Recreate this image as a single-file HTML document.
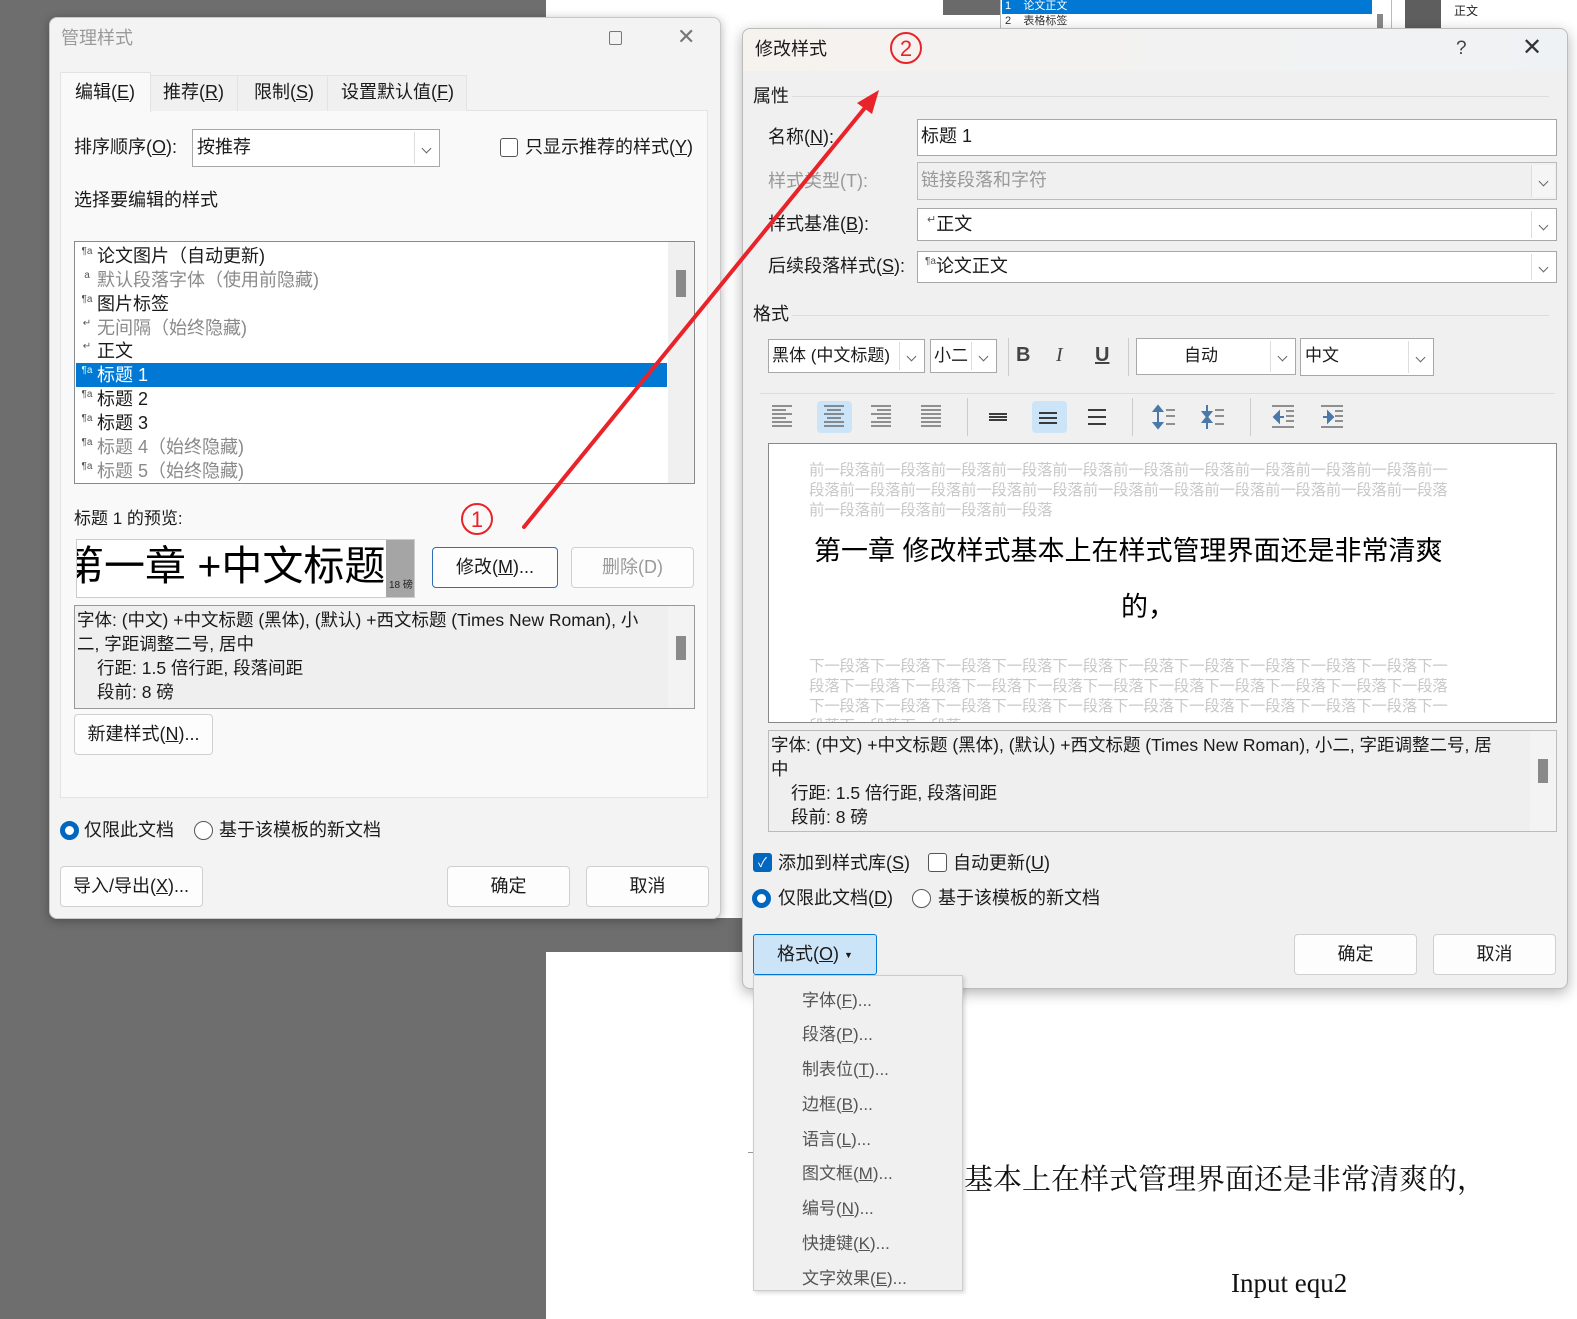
<!DOCTYPE html>
<html><head><meta charset="utf-8">
<style>
*{margin:0;padding:0;box-sizing:border-box}
body{width:1577px;height:1319px;position:relative;overflow:hidden;background:#fff;font-family:"Liberation Sans","Noto Sans CJK SC",sans-serif;font-size:18px;color:#1a1a1a}
.a{position:absolute}
.t{position:absolute;white-space:nowrap;line-height:1}
.btn{position:absolute;background:#fdfdfd;border:1px solid #d0d0d0;border-radius:4px;text-align:center;font-size:18px}
.dd{position:absolute;background:#fff;border:1px solid #a8a8a8}
.dd .ar{position:absolute;right:1px;top:2px;bottom:2px;width:24px;border-left:1px solid #ddd;background:#fff}
.dd .ar:after{content:"";position:absolute;left:8px;top:40%;width:6px;height:6px;border-right:1px solid #666;border-bottom:1px solid #666;transform:rotate(45deg)}
.gray{color:#8a8a8a}
.li{position:absolute;left:2px;height:24px;line-height:24px;font-size:18px;white-space:nowrap;width:590px}
.pm{display:inline-block;width:20px;font-size:10px;vertical-align:top;line-height:16px;color:#555;text-align:center}
.ic{position:absolute}
.mi{position:absolute;left:48px;font-size:17px;color:#555;white-space:nowrap}
.pv{position:absolute;left:40px;font-size:15.5px;color:#c8c8c8;white-space:nowrap;line-height:20px;letter-spacing:-0.3px}
</style></head><body>

<div class="a" style="left:0;top:0;width:546px;height:1319px;background:#6e6e6e"></div>
<div class="a" style="left:546px;top:918px;width:200px;height:34px;background:#6e6e6e"></div>
<div class="a" style="left:943px;top:0;width:58px;height:15px;background:#6a6a6a"></div>
<div class="a" style="left:1000px;top:0;width:392px;height:30px;background:#fff;border:1px solid #bbb;border-top:none"></div>
<div class="a" style="left:1002px;top:0;width:370px;height:14px;background:#0078d4"></div>
<div class="t" style="left:1005px;top:1px;font-size:11px;color:#fff">1&nbsp;&nbsp;&nbsp;&nbsp;论文正文</div>
<div class="t" style="left:1005px;top:16px;font-size:11px;color:#333">2&nbsp;&nbsp;&nbsp;&nbsp;表格标签</div>
<div class="a" style="left:1377px;top:14px;width:6px;height:16px;background:#888"></div>
<div class="a" style="left:1405px;top:0;width:36px;height:30px;background:#5e5e5e"></div>
<div class="t" style="left:1454px;top:5px;font-size:12px;color:#222">正文</div>

<div class="a" style="left:748px;top:1152px;width:14px;height:1px;background:#999"></div>
<div class="t" style="left:964px;top:1166px;font-family:'Liberation Serif','Noto Serif CJK SC',serif;font-size:29px;color:#111">基本上在样式管理界面还是非常清爽的，</div>
<div class="t" style="left:1231px;top:1270px;font-family:'Liberation Serif',serif;font-size:27px;color:#111">Input equ2</div>

<div class="a" style="left:49px;top:17px;width:672px;height:902px;background:#f3f3f3;border:1px solid #c8c8c8;border-radius:8px;box-shadow:0 2px 10px rgba(0,0,0,.3)"></div>
<div class="t" style="left:61px;top:29px;font-size:18px;color:#9a9a9a">管理样式</div>
<div class="a" style="left:609px;top:31px;width:13px;height:14px;border:1px solid #777;border-radius:2px"></div>
<div class="t" style="left:677px;top:26px;font-size:22px;color:#777">✕</div>
<div class="a" style="left:60px;top:110px;width:648px;height:688px;background:#f9f9f9;border:1px solid #e3e3e3"></div>
<div class="a" style="left:150px;top:75px;width:317px;height:36px;background:#f0f0f0;border:1px solid #e3e3e3;border-bottom:none"></div>
<div class="a" style="left:237px;top:75px;width:1px;height:36px;background:#e3e3e3"></div>
<div class="a" style="left:327px;top:75px;width:1px;height:36px;background:#e3e3e3"></div>
<div class="a" style="left:60px;top:72px;width:91px;height:40px;background:#f9f9f9;border:1px solid #e3e3e3;border-bottom:none"></div>
<div class="t" style="left:75px;top:83px">编辑(<u>E</u>)</div>
<div class="t" style="left:163px;top:83px">推荐(<u>R</u>)</div>
<div class="t" style="left:254px;top:83px">限制(<u>S</u>)</div>
<div class="t" style="left:341px;top:83px">设置默认值(<u>F</u>)</div>
<div class="t" style="left:74px;top:138px">排序顺序(<u>O</u>):</div>
<div class="dd" style="left:192px;top:129px;width:248px;height:38px"><div class="ar"></div></div>
<div class="t" style="left:197px;top:138px">按推荐</div>
<div class="a" style="left:500px;top:138px;width:18px;height:19px;border:1px solid #555;border-radius:3px;background:#fff"></div>
<div class="t" style="left:525px;top:138px">只显示推荐的样式(<u>Y</u>)</div>
<div class="t" style="left:74px;top:191px">选择要编辑的样式</div>
<div class="a" style="left:74px;top:241px;width:621px;height:243px;background:#fff;border:1px solid #8a8a8a;overflow:hidden">
 <div class="a" style="right:0;top:0;width:26px;height:243px;background:#f0f0f0"></div>
 <div class="a" style="right:8px;top:28px;width:10px;height:27px;background:#8a8a8a"></div>
 <div class="a" style="left:1px;top:121px;width:591px;height:24px;background:#0078d4"></div>
 <div class="li" style="top:2px"><span class="pm">¶a</span>论文图片（自动更新)</div>
 <div class="li gray" style="top:26px"><span class="pm">a</span>默认段落字体（使用前隐藏)</div>
 <div class="li" style="top:50px"><span class="pm">¶a</span>图片标签</div>
 <div class="li gray" style="top:74px"><span class="pm">↵</span>无间隔（始终隐藏)</div>
 <div class="li" style="top:97px"><span class="pm">↵</span>正文</div>
 <div class="li" style="top:121px;color:#fff"><span class="pm" style="color:#cfe">¶a</span>标题 1</div>
 <div class="li" style="top:145px"><span class="pm">¶a</span>标题 2</div>
 <div class="li" style="top:169px"><span class="pm">¶a</span>标题 3</div>
 <div class="li gray" style="top:193px"><span class="pm">¶a</span>标题 4（始终隐藏)</div>
 <div class="li gray" style="top:217px"><span class="pm">¶a</span>标题 5（始终隐藏)</div>
</div>
<div class="t" style="left:74px;top:510px;font-size:17px">标题 1 的预览:</div>
<div class="a" style="left:76px;top:539px;width:339px;height:59px;background:#fff;border:1px solid #ccc;overflow:hidden">
 <div class="t" style="left:-14px;top:6px;font-size:41px;color:#000">第一章 +中文标题</div>
 <div class="a" style="left:309px;top:0;width:30px;height:59px;background:#a5a5a5"></div>
 <div class="t" style="left:312px;top:41px;font-size:10px;color:#222">18 磅</div>
</div>
<div class="btn" style="left:432px;top:547px;width:126px;height:41px;line-height:39px;border:1px solid #2f6fb3">修改(<u>M</u>)...</div>
<div class="btn" style="left:571px;top:547px;width:123px;height:41px;line-height:39px;color:#999">删除(D)</div>
<div class="a" style="left:74px;top:605px;width:621px;height:104px;background:#efefef;border:1px solid #999;overflow:hidden">
 <div class="a" style="right:0;top:0;width:26px;height:104px;background:#f3f3f3"></div>
 <div class="a" style="right:8px;top:30px;width:10px;height:24px;background:#8a8a8a"></div>
 <div class="t" style="left:2px;top:6px;font-size:17.5px">字体: (中文) +中文标题 (黑体), (默认) +西文标题 (Times New Roman), 小</div>
 <div class="t" style="left:2px;top:30px;font-size:17.5px">二, 字距调整二号, 居中</div>
 <div class="t" style="left:22px;top:54px;font-size:17.5px">行距: 1.5 倍行距, 段落间距</div>
 <div class="t" style="left:22px;top:78px;font-size:17.5px">段前: 8 磅</div>
</div>
<div class="btn" style="left:74px;top:714px;width:139px;height:41px;line-height:39px">新建样式(<u>N</u>)...</div>
<div class="a" style="left:60px;top:821px;width:19px;height:19px;border-radius:50%;border:5px solid #0067c0;background:#fff"></div>
<div class="t" style="left:84px;top:821px">仅限此文档</div>
<div class="a" style="left:194px;top:821px;width:19px;height:19px;border-radius:50%;border:1px solid #555;background:#fff"></div>
<div class="t" style="left:219px;top:821px">基于该模板的新文档</div>
<div class="btn" style="left:60px;top:866px;width:143px;height:41px;line-height:39px;text-align:left;padding-left:12px">导入/导出(<u>X</u>)...</div>
<div class="btn" style="left:447px;top:866px;width:123px;height:41px;line-height:39px">确定</div>
<div class="btn" style="left:586px;top:866px;width:123px;height:41px;line-height:39px">取消</div>

<div class="a" style="left:742px;top:28px;width:826px;height:961px;background:#f0f0f0;border:1px solid #bcbcbc;border-radius:8px;box-shadow:0 4px 14px rgba(0,0,0,.3)"></div>
<div class="a" style="left:743px;top:29px;width:824px;height:42px;background:linear-gradient(90deg,#f6f2ee,#eff2f5);border-radius:8px 8px 0 0"></div>
<div class="t" style="left:755px;top:40px">修改样式</div>
<div class="t" style="left:1456px;top:39px;font-size:19px;color:#444">?</div>
<div class="t" style="left:1522px;top:36px;font-size:24px;color:#333">✕</div>
<div class="t" style="left:753px;top:87px">属性</div>
<div class="a" style="left:792px;top:96px;width:757px;height:1px;background:#dcdcdc"></div>
<div class="t" style="left:768px;top:128px">名称(<u>N</u>):</div>
<div class="t gray" style="left:768px;top:172px;color:#999">样式类型(T):</div>
<div class="t" style="left:768px;top:215px">样式基准(<u>B</u>):</div>
<div class="t" style="left:768px;top:257px">后续段落样式(<u>S</u>):</div>
<div class="dd" style="left:917px;top:119px;width:640px;height:37px"></div>
<div class="t" style="left:921px;top:127px">标题 1</div>
<div class="dd" style="left:917px;top:162px;width:640px;height:38px;background:#f0f0f0;border-color:#bbb"><div class="ar" style="background:#f5f5f5"></div></div>
<div class="t" style="left:921px;top:171px;color:#999">链接段落和字符</div>
<div class="dd" style="left:917px;top:208px;width:640px;height:33px"><div class="ar"></div></div>
<div class="t" style="left:927px;top:215px"><span style="font-size:11px;vertical-align:top;color:#555">↵</span>正文</div>
<div class="dd" style="left:917px;top:251px;width:640px;height:32px"><div class="ar"></div></div>
<div class="t" style="left:925px;top:257px"><span style="font-size:10px;vertical-align:top;color:#555">¶a</span>论文正文</div>
<div class="t" style="left:753px;top:305px">格式</div>
<div class="a" style="left:792px;top:315px;width:757px;height:1px;background:#dcdcdc"></div>
<div class="dd" style="left:768px;top:339px;width:157px;height:34px"><div class="ar"></div></div>
<div class="t" style="left:772px;top:347px;font-size:17px">黑体 (中文标题)</div>
<div class="dd" style="left:930px;top:339px;width:67px;height:34px"><div class="ar"></div></div>
<div class="t" style="left:934px;top:347px;font-size:17px">小二</div>
<div class="a" style="left:1008px;top:338px;width:1px;height:38px;background:#ccc"></div>
<div class="t" style="left:1016px;top:345px;font-size:20px;font-weight:bold;color:#444">B</div>
<div class="t" style="left:1056px;top:345px;font-size:20px;font-style:italic;font-family:'Liberation Serif',serif;color:#444">I</div>
<div class="t" style="left:1095px;top:345px;font-size:20px;text-decoration:underline;color:#444;font-weight:bold">U</div>
<div class="a" style="left:1128px;top:338px;width:1px;height:38px;background:#ccc"></div>
<div class="dd" style="left:1136px;top:338px;width:160px;height:37px"><div class="ar"></div></div>
<div class="t" style="left:1184px;top:347px;font-size:17px">自动</div>
<div class="dd" style="left:1300px;top:338px;width:134px;height:38px"><div class="ar"></div></div>
<div class="t" style="left:1305px;top:347px;font-size:17px">中文</div>
<div class="a" style="left:760px;top:393px;width:795px;height:1px;background:#dcdcdc"></div>
<div class="a" style="left:817px;top:401px;width:35px;height:32px;background:#cce4f7;border-radius:4px"></div>
<div class="a" style="left:1032px;top:401px;width:35px;height:32px;background:#cce4f7;border-radius:4px"></div>
<div class="a" style="left:967px;top:398px;width:1px;height:38px;background:#ccc"></div>
<div class="a" style="left:1132px;top:398px;width:1px;height:38px;background:#ccc"></div>
<div class="a" style="left:1250px;top:398px;width:1px;height:38px;background:#ccc"></div>
<svg class="a" style="left:760px;top:400px" width="600" height="36" viewBox="760 400 600 36">
 <g stroke="#555" stroke-width="1.2">
  <path d="M772 406h20M772 410h14M772 414h20M772 418h14M772 422h20M772 426h20"/>
  <path d="M824 406h20M827 410h14M824 414h20M827 418h14M824 422h20M824 426h20"/>
  <path d="M871 406h20M877 410h14M871 414h20M877 418h14M871 422h20M871 426h20"/>
  <path d="M921 406h20M921 410h20M921 414h20M921 418h20M921 422h20M921 426h20"/>
 </g>
 <g stroke="#222" stroke-width="1.8">
  <path d="M989 414h18M989 417h18M989 420h18"/>
  <path d="M1039 413h18M1039 418h18M1039 423h18"/>
  <path d="M1088 410h18M1088 417h18M1088 424h18"/>
 </g>
 <g stroke="#4a78a8" stroke-width="2" fill="#4a78a8">
  <path d="M1158 407v20" fill="none"/><path d="M1154 411l4-5 4 5zM1154 423l4 5 4-5z"/>
  <path d="M1207 405v10M1207 419v10" fill="none"/><path d="M1203 412l4 5 4-5zM1203 422l4-5 4 5z"/>
  <path d="M1276 417h8" fill="none"/><path d="M1279 412l-5 5 5 5z"/>
  <path d="M1323 417h8" fill="none"/><path d="M1328 412l5 5-5 5z"/>
 </g>
 <g stroke="#555" stroke-width="1.2">
  <path d="M1166 410h9M1166 416h9M1166 424h9M1215 410h9M1215 416h9M1215 424h9"/>
  <path d="M1272 406h22M1286 411h8M1286 416h8M1286 421h8M1272 427h22"/>
  <path d="M1321 406h22M1335 411h8M1335 416h8M1335 421h8M1321 427h22"/>
 </g>
</svg>
<div class="a" style="left:768px;top:443px;width:789px;height:280px;background:#fff;border:1px solid #888;overflow:hidden">
 <div class="pv" style="top:17px">前一段落前一段落前一段落前一段落前一段落前一段落前一段落前一段落前一段落前一段落前一</div>
 <div class="pv" style="top:37px">段落前一段落前一段落前一段落前一段落前一段落前一段落前一段落前一段落前一段落前一段落</div>
 <div class="pv" style="top:57px">前一段落前一段落前一段落前一段落</div>
 <div class="t" style="left:45px;top:94px;font-size:27px;color:#000;font-weight:normal">第一章 修改样式基本上在样式管理界面还是非常清爽</div>
 <div class="t" style="left:352px;top:150px;font-size:27px;color:#000;font-weight:normal">的，</div>
 <div class="pv" style="top:213px">下一段落下一段落下一段落下一段落下一段落下一段落下一段落下一段落下一段落下一段落下一</div>
 <div class="pv" style="top:233px">段落下一段落下一段落下一段落下一段落下一段落下一段落下一段落下一段落下一段落下一段落</div>
 <div class="pv" style="top:253px">下一段落下一段落下一段落下一段落下一段落下一段落下一段落下一段落下一段落下一段落下一</div>
 <div class="pv" style="top:273px">段落下一段落下一段落</div>
</div>
<div class="a" style="left:768px;top:730px;width:789px;height:102px;background:#efefef;border:1px solid #bbb;overflow:hidden">
 <div class="a" style="right:0;top:0;width:26px;height:102px;background:#f3f3f3"></div>
 <div class="a" style="right:8px;top:28px;width:10px;height:24px;background:#8a8a8a"></div>
 <div class="t" style="left:2px;top:6px;font-size:17.5px">字体: (中文) +中文标题 (黑体), (默认) +西文标题 (Times New Roman), 小二, 字距调整二号, 居</div>
 <div class="t" style="left:2px;top:30px;font-size:17.5px">中</div>
 <div class="t" style="left:22px;top:54px;font-size:17.5px">行距: 1.5 倍行距, 段落间距</div>
 <div class="t" style="left:22px;top:78px;font-size:17.5px">段前: 8 磅</div>
</div>
<div class="a" style="left:753px;top:853px;width:19px;height:19px;border-radius:3px;background:#0067c0;color:#fff;font-size:13px;line-height:19px;text-align:center">✓</div>
<div class="t" style="left:778px;top:854px">添加到样式库(<u>S</u>)</div>
<div class="a" style="left:928px;top:853px;width:19px;height:19px;border-radius:3px;border:1px solid #555;background:#fff"></div>
<div class="t" style="left:953px;top:854px">自动更新(<u>U</u>)</div>
<div class="a" style="left:752px;top:889px;width:19px;height:19px;border-radius:50%;border:5px solid #0067c0;background:#fff"></div>
<div class="t" style="left:778px;top:889px">仅限此文档(<u>D</u>)</div>
<div class="a" style="left:912px;top:889px;width:19px;height:19px;border-radius:50%;border:1px solid #555;background:#fff"></div>
<div class="t" style="left:938px;top:889px">基于该模板的新文档</div>
<div class="btn" style="left:753px;top:934px;width:124px;height:41px;line-height:39px;background:#cce4f7;border:1px solid #0078d4;border-radius:3px">格式(<u>O</u>) <span style="font-size:9px;vertical-align:middle">▼</span></div>
<div class="btn" style="left:1294px;top:934px;width:123px;height:41px;line-height:39px">确定</div>
<div class="btn" style="left:1433px;top:934px;width:123px;height:41px;line-height:39px">取消</div>
<div class="a" style="left:753px;top:975px;width:210px;height:316px;background:#f0f0f0;border:1px solid #ccc;box-shadow:2px 2px 4px rgba(0,0,0,.15)">
 <div class="mi" style="top:10px">字体(<u>F</u>)...</div>
 <div class="mi" style="top:44px">段落(<u>P</u>)...</div>
 <div class="mi" style="top:79px">制表位(<u>T</u>)...</div>
 <div class="mi" style="top:114px">边框(<u>B</u>)...</div>
 <div class="mi" style="top:149px">语言(<u>L</u>)...</div>
 <div class="mi" style="top:183px">图文框(<u>M</u>)...</div>
 <div class="mi" style="top:218px">编号(<u>N</u>)...</div>
 <div class="mi" style="top:253px">快捷键(<u>K</u>)...</div>
 <div class="mi" style="top:288px">文字效果(<u>E</u>)...</div>
</div>

<svg class="a" style="left:0;top:0" width="1577" height="1319">
 <line x1="524" y1="527" x2="868" y2="104" stroke="#e8232a" stroke-width="4" stroke-linecap="round"/>
 <path d="M879 90 L857 103 L872 114 Z" fill="#e8232a"/>
 <circle cx="477" cy="519" r="15" fill="none" stroke="#e8232a" stroke-width="2"/>
 <text x="477" y="527" font-size="22" fill="#e8232a" text-anchor="middle" font-family="Liberation Sans">1</text>
 <circle cx="906" cy="48" r="15" fill="none" stroke="#e8232a" stroke-width="2"/>
 <text x="906" y="56" font-size="22" fill="#e8232a" text-anchor="middle" font-family="Liberation Sans">2</text>
</svg>
</body></html>
